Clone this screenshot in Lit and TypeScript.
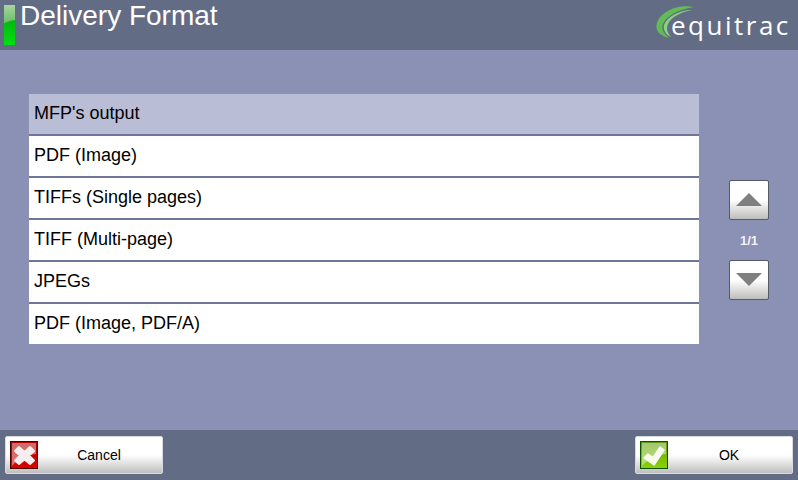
import { LitElement, html, css } from "lit";
import { customElement } from "lit/decorators.js";

const ITEMS = ["MFP's output", "PDF (Image)", "TIFFs (Single pages)", "TIFF (Multi-page)", "JPEGs", "PDF (Image, PDF/A)"];

@customElement("app-root")
export class AppRoot extends LitElement {
  static styles = css`
    :host { display: block; width: 798px; height: 480px; overflow: hidden; font-family: "Liberation Sans", Arial, sans-serif; }
    .page { width: 798px; height: 480px; display: flex; flex-direction: column; background: #8b90b5; }
    .header { height: 50px; background: #636c85; display: flex; align-items: flex-start; padding-left: 4px; box-sizing: border-box; flex: none; }
    .led { width: 11px; height: 40px; margin-top: 5px; flex: none; }
    .title { color: #fff; font-size: 28px; line-height: 32px; margin-left: 5px; }
    .logo { margin-left: auto; margin-right: 5px; margin-top: 5px; height: 36px; position: relative; width: 138px; }
    .logo svg { position: absolute; left: 0; top: 0; }
    .logo span { position: absolute; left: 16px; top: 2px; color: #fff; font-family: "Open Sans", sans-serif; font-size: 26px; line-height: 36px; letter-spacing: 2.5px; }
    .main { flex: 1; display: flex; padding: 44px 0 0 29px; box-sizing: border-box; }
    .list { width: 670px; display: flex; flex-direction: column; gap: 2px; background: #6f7599; align-self: flex-start; }
    .row { height: 40px; background: #fff; color: #000; font-size: 18px; line-height: 38px; padding-left: 5px; box-sizing: border-box; }
    .row.sel { background: #b9bdd5; }
    .pager { margin-left: 30px; margin-top: 86px; width: 40px; display: flex; flex-direction: column; align-items: center; }
    .sq { width: 40px; height: 40px; box-sizing: border-box; border: 1px solid #555a66; border-radius: 2px; background: linear-gradient(180deg, #fff 0%, #fff 50%, #bdbdbd 100%); display: flex; align-items: center; justify-content: center; padding: 0; }
    .count { height: 40px; line-height: 41px; color: #f2f3fa; font-size: 13px; font-weight: bold; }
    .footer { height: 50px; background: #636c85; flex: none; display: flex; justify-content: space-between; padding: 6px 5px 6px; box-sizing: border-box; }
    .btn { width: 158px; height: 38px; box-sizing: border-box; border: 1px solid #d8dae2; border-radius: 2px; background: linear-gradient(180deg, #fff 0%, #fff 50%, #bfbfbf 100%); display: flex; align-items: center; padding: 0 2px 0 4px; font-family: inherit; font-size: 14px; color: #000; }
    .btn .ico { width: 28px; height: 28px; flex: none; }
    .btn .lbl { flex: 1; text-align: center; }
  `;

  render() {
    return html`
      <div class="page">
        <div class="header">
          <svg class="led" viewBox="0 0 11 40">
            <defs>
              <linearGradient id="lt" x1="0" y1="0" x2="0" y2="1"><stop offset="0" stop-color="#a6d6a0"/><stop offset="1" stop-color="#68bc64"/></linearGradient>
              <linearGradient id="lb" x1="0" y1="0" x2="0" y2="1"><stop offset="0" stop-color="#06a012"/><stop offset="1" stop-color="#00e00e"/></linearGradient>
            </defs>
            <rect width="11" height="40" fill="url(#lb)"/>
            <path d="M0 0 H11 V15 C7 15.5 3 16.5 0 18.5 Z" fill="url(#lt)"/>
          </svg>
          <div class="title">Delivery Format</div>
          <div class="logo">
            <svg width="50" height="36" viewBox="0 0 50 36">
              <path d="M39 2 C22 -1 4 7 1.500 20 C0.500 27 6 31 14 33 C8 28 6 24 8 19 C11 11 24 4 39 2 Z" fill="#62bb55"/>
              <path d="M37 5 C24 5 12 12 9 20 C8 25 11 30 16 32 C12 27 11 24 13 19 C16 12 26 7 37 5 Z" fill="#8ccf80"/>
            </svg>
            <span>equitrac</span>
          </div>
        </div>
        <div class="main">
          <div class="list">
            ${ITEMS.map((t, i) => html`<div class="row ${i === 0 ? "sel" : ""}">${t}</div>`)}
          </div>
          <div class="pager">
            <div class="sq"><svg width="28" height="14" viewBox="0 0 28 14"><path d="M14 0 L27 13 H1 Z" fill="#7f7f7f"/></svg></div>
            <div class="count">1/1</div>
            <div class="sq"><svg width="28" height="14" viewBox="0 0 28 14"><path d="M1 0 H27 L14 13 Z" fill="#7f7f7f"/></svg></div>
          </div>
        </div>
        <div class="footer">
          <button class="btn">
            <svg class="ico" viewBox="0 0 28 28">
              <defs><linearGradient id="r" x1="0" y1="0" x2="0" y2="1"><stop offset="0" stop-color="#a80000"/><stop offset="1" stop-color="#e00000"/></linearGradient></defs>
              <rect x=".5" y=".5" width="27" height="27" fill="url(#r)" stroke="#4a0000"/>
              <path d="M2 2 H26 V13 C18 14 8 18 2 25 Z" fill="#fff" fill-opacity=".42"/>
              <path d="M9 6 L14.5 11 L20 6 L24 10 L19 14.5 L24 19.5 L20 23 L14.5 18.5 L9 23 L5 19.5 L10 14.5 L5 10 Z" fill="#f6eeee" stroke="#f6eeee" stroke-width="2" stroke-linejoin="round"/>
            </svg>
            <span class="lbl">Cancel</span>
          </button>
          <button class="btn">
            <svg class="ico" viewBox="0 0 28 28">
              <defs><linearGradient id="g" x1="0" y1="0" x2="0" y2="1"><stop offset="0" stop-color="#5f9a10"/><stop offset="1" stop-color="#8cd400"/></linearGradient></defs>
              <rect x=".5" y=".5" width="27" height="27" fill="url(#g)" stroke="#0a5000"/>
              <path d="M2 2 H26 V13 C18 14 8 18 2 25 Z" fill="#fff" fill-opacity=".42"/>
              <path d="M4 17 L8 13 L13 16.5 L20 6 L24 9 L14 24 Z" fill="#f8faf0" stroke="#f8faf0" stroke-width="1.5" stroke-linejoin="round"/>
            </svg>
            <span class="lbl">OK</span>
          </button>
        </div>
      </div>
    `;
  }
}
